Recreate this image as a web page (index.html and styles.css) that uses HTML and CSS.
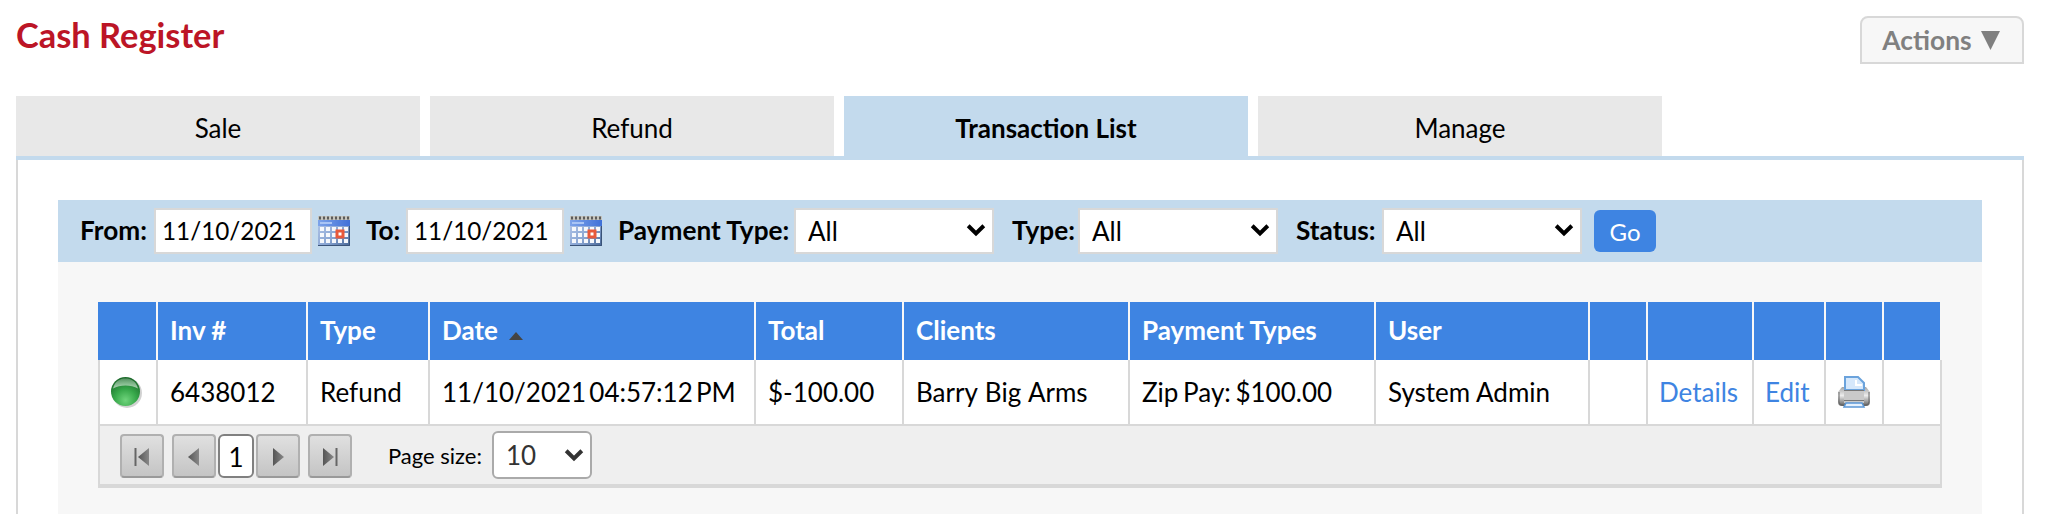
FILE: index.html
```html
<!DOCTYPE html>
<html lang="en">
<head>
    <meta charset="UTF-8">
    <meta name="viewport" content="width=device-width, initial-scale=1.0">
    <title>Cash Register</title>
    <link rel="stylesheet" href="styles.css">
</head>
<body>
    <!-- shared icons -->
    <svg class="defs" width="0" height="0">
        <defs>
            <linearGradient id="calHead" x1="0" y1="0" x2="1" y2="0">
                <stop offset="0" stop-color="#7da3ea"/>
                <stop offset="1" stop-color="#3f70d8"/>
            </linearGradient>
            <linearGradient id="calBody" x1="0" y1="0" x2="1" y2="1">
                <stop offset="0" stop-color="#b9cbec"/>
                <stop offset="0.6" stop-color="#88a4d2"/>
                <stop offset="1" stop-color="#466594"/>
            </linearGradient>
            <radialGradient id="ball" cx="0.5" cy="0.8" r="0.75">
                <stop offset="0" stop-color="#6fd47c"/>
                <stop offset="0.5" stop-color="#37a84a"/>
                <stop offset="1" stop-color="#1c6b2b"/>
            </radialGradient>
            <linearGradient id="shine" x1="0" y1="0" x2="0" y2="1">
                <stop offset="0" stop-color="#fff" stop-opacity="0.25"/>
                <stop offset="1" stop-color="#fff" stop-opacity="0.6"/>
            </linearGradient>
            <linearGradient id="metal" x1="0" y1="0" x2="0" y2="1">
                <stop offset="0" stop-color="#a5a5a5"/>
                <stop offset="0.45" stop-color="#ececec"/>
                <stop offset="1" stop-color="#5e5e5e"/>
            </linearGradient>
            <linearGradient id="arrow" x1="0" y1="0" x2="1" y2="0">
                <stop offset="0" stop-color="#555"/>
                <stop offset="1" stop-color="#888"/>
            </linearGradient>
            <symbol id="calendar" viewBox="0 0 32 30">
                <rect width="32" height="30" fill="url(#calBody)"/>
                <rect width="32" height="4" fill="#c4c4be"/>
                <path d="M1 2h31" stroke="#5b5b5b" stroke-width="3" stroke-dasharray="2 2"/>
                <rect y="4" width="32" height="6" fill="url(#calHead)"/>
                <path d="M2 7h12" stroke="#a9c4f5" stroke-width="2"/>
                <path d="M2 13h28M2 19h28M2 25h28" stroke="#f6f8fc" stroke-width="4" stroke-dasharray="4 2"/>
                <rect x="19" y="15" width="6" height="6" fill="#fff" stroke="#e8593b" stroke-width="3"/>
                <path d="M31.500 10v19.500H0" fill="none" stroke="#3a5378"/>
            </symbol>
            <symbol id="chevron" viewBox="0 0 20 14">
                <path d="M2.200 2.800L10 10.400l7.800-7.600" fill="none" stroke="currentColor" stroke-width="4"/>
            </symbol>
        </defs>
    </svg>

    <div class="header">
        <h1>Cash Register</h1>
        <button class="actions">Actions <svg width="19" height="19"><path d="M0 0h19L9.500 19z" fill="currentColor"/></svg></button>
    </div>

    <div class="tabs">
        <a class="tab">Sale</a>
        <a class="tab">Refund</a>
        <a class="tab active">Transaction List</a>
        <a class="tab">Manage</a>
    </div>

    <div class="panel">
        <div class="filter">
            <label class="from">From:</label>
            <input type="text" value="11/10/2021">
            <svg class="cal"><use href="#calendar"/></svg>
            <label class="to">To:</label>
            <input type="text" value="11/10/2021">
            <svg class="cal"><use href="#calendar"/></svg>
            <label class="payment">Payment Type:</label>
            <span class="select"><select><option>All</option></select><svg class="chev"><use href="#chevron"/></svg></span>
            <label class="type">Type:</label>
            <span class="select"><select><option>All</option></select><svg class="chev"><use href="#chevron"/></svg></span>
            <label class="status">Status:</label>
            <span class="select"><select><option>All</option></select><svg class="chev"><use href="#chevron"/></svg></span>
            <button class="go">Go</button>
        </div>

        <div class="content">
            <table class="grid">
                <colgroup>
                    <col class="c-icon"><col class="c-inv"><col class="c-type"><col class="c-date"><col class="c-total"><col class="c-clients"><col class="c-pay"><col class="c-user"><col class="c-blank"><col class="c-details"><col class="c-edit"><col class="c-blank"><col class="c-blank">
                </colgroup>
                <thead>
                    <tr>
                        <th></th>
                        <th>Inv #</th>
                        <th>Type</th>
                        <th>Date <svg class="sort" width="14" height="8"><path d="M0 8L7 0l7 8z" fill="#444"/></svg></th>
                        <th>Total</th>
                        <th>Clients</th>
                        <th>Payment Types</th>
                        <th>User</th>
                        <th></th>
                        <th></th>
                        <th></th>
                        <th></th>
                        <th></th>
                    </tr>
                </thead>
                <tbody>
                    <tr>
                        <td>
                            <svg class="icon" width="32" height="32" viewBox="0 0 32 32">
                                <ellipse cx="16" cy="17" rx="15" ry="15" fill="#000" opacity="0.18"/>
                                <circle cx="14.500" cy="15.500" r="14.500" fill="url(#ball)"/>
                                <path d="M2 12.500C4 5 9 2.500 14.500 2.500S25 5 27 12.500C20 8.500 9 8.500 2 12.500z" fill="url(#shine)"/>
                            </svg>
                        </td>
                        <td>6438012</td>
                        <td>Refund</td>
                        <td class="date">11/10/2021 04:57:12 PM</td>
                        <td>$-100.00</td>
                        <td class="client">Barry Big Arms</td>
                        <td class="payments">Zip Pay: $100.00</td>
                        <td>System Admin</td>
                        <td></td>
                        <td><a>Details</a></td>
                        <td><a>Edit</a></td>
                        <td>
                            <svg class="icon" width="32" height="32" viewBox="0 0 32 32">
                                <path d="M4 11h24l4 5v10q0 4-4 4H4q-4 0-4-4V16z" fill="url(#metal)"/>
                                <path d="M1 16v10q0 3 4 3h22q4 0 4-3V16" fill="none" stroke="#666"/>
                                <path d="M7 14V1h13l6 6v7z" fill="#d6e8fb" stroke="#6ba3dc" stroke-width="2"/>
                                <path d="M18 4v5h6" fill="none" stroke="#fff" stroke-width="2"/>
                                <rect x="6" y="14" width="20" height="13" fill="#c9c9c9"/>
                                <path d="M6 14.500h20M6 24.500h20" stroke="#777"/>
                                <path d="M8 27h16l2 4H6z" fill="#e6f1fd" stroke="#5b97d6" stroke-width="1.500"/>
                            </svg>
                        </td>
                        <td></td>
                    </tr>
                </tbody>
            </table>
            <div class="pager">
                <button class="nav"><svg width="16" height="20"><path d="M1.500 1v18" stroke="#666" stroke-width="2"/><path d="M15 1v18L4 10z" fill="url(#arrow)"/></svg></button>
                <button class="nav prev"><svg width="16" height="20"><path d="M13 1v18L2 10z" fill="url(#arrow)"/></svg></button>
                <span class="page">1</span>
                <button class="nav"><svg width="16" height="20"><path d="M3 1v18l11-9z" fill="url(#arrow)"/></svg></button>
                <button class="nav last"><svg width="16" height="20"><path d="M1 1v18l11-9z" fill="url(#arrow)"/><path d="M14.500 1v18" stroke="#666" stroke-width="2"/></svg></button>
                <label>Page size:</label>
                <span class="select size"><select><option>10</option></select><svg class="chev"><use href="#chevron"/></svg></span>
            </div>
        </div>
    </div>
</body>
</html>
```
FILE: styles.css
```css
* {
    box-sizing: border-box;
}

body {
    margin: 0;
    padding: 16px 28px 0 16px;
    height: 514px;
    overflow: hidden;
    display: flex;
    flex-direction: column;
    font-family: Lato, sans-serif;
    font-size: 26px;
    color: #000;
    background: #fff;
}

button, input, select {
    font-family: inherit;
    margin: 0;
}

.defs {
    position: absolute;
}

/* title row */
.header {
    display: flex;
    justify-content: space-between;
    height: 80px;
}

h1 {
    margin: 0;
    font-size: 34.4px;
    line-height: 38px;
    color: #bc1526;
}

.actions {
    display: flex;
    justify-content: center;
    align-items: center;
    gap: 9px;
    width: 164px;
    height: 48px;
    padding: 0 2px 0 0;
    border: 2px solid #d8d8d8;
    border-radius: 8px 8px 0 0;
    background: #f7f7f7;
    color: #808080;
    font-size: 26.4px;
    font-weight: bold;
}

/* tabs */
.tabs {
    display: flex;
    gap: 10px;
}

.tab {
    width: 404px;
    height: 60px;
    line-height: 64px;
    text-align: center;
    background: #e8e8e8;
}

.tab.active {
    background: #c3daed;
    font-weight: bold;
}

.panel {
    flex: 1;
    display: flex;
    flex-direction: column;
    border-top: 4px solid #c3daed;
    padding: 40px 42px 0;
    background: linear-gradient(#d8d8d8, #d8d8d8) left / 2px 100% no-repeat,
                linear-gradient(#d8d8d8, #d8d8d8) right / 2px 100% no-repeat;
}

/* search bar */
.filter {
    display: flex;
    align-items: center;
    height: 62px;
    padding-left: 22px;
    background: #c3daed;
}

.filter label {
    padding-bottom: 2px;
    font-size: 26.2px;
    font-weight: bold;
    white-space: nowrap;
}

.from { width: 74px; }
.to { width: 40px; }
.payment { width: 176px; }
.type { width: 66px; }
.status { width: 86px; }

.filter input {
    width: 158px;
    height: 46px;
    padding: 0 6px 2px;
    border: 2px solid #d8d8d8;
    background: #fff;
    font-size: 24.3px;
}

.cal {
    width: 32px;
    height: 30px;
    margin: 0 16px 0 6px;
}

.select {
    display: grid;
    align-items: center;
    width: 200px;
    height: 46px;
    margin-right: 18px;
}

.select select, .select svg {
    grid-area: 1 / 1;
}

.select select {
    appearance: none;
    width: 100%;
    height: 100%;
    padding: 0 12px;
    border: 2px solid #d8d8d8;
    border-radius: 0;
    background: #fff;
    color: #000;
    font-size: 26px;
}

.chev {
    justify-self: end;
    width: 20px;
    height: 14px;
    margin: 0 8px 2px 0;
    pointer-events: none;
}

.go {
    width: 62px;
    height: 42px;
    margin-left: -6px;
    padding: 0;
    border: 0;
    border-radius: 6px;
    background: #3e84e2;
    color: #fff;
    font-size: 24px;
}

/* results */
.content {
    flex: 1;
    padding: 40px 40px 0;
    background: #f7f7f7;
}

.grid {
    width: 1844px;
    table-layout: fixed;
    border-collapse: separate;
    border-spacing: 0;
}

.c-icon { width: 60px; }
.c-inv { width: 150px; }
.c-type { width: 122px; }
.c-date { width: 326px; }
.c-total { width: 148px; }
.c-clients { width: 226px; }
.c-pay { width: 246px; }
.c-user { width: 214px; }
.c-blank { width: 58px; }
.c-details { width: 106px; }
.c-edit { width: 72px; }

.grid th, .grid td {
    padding: 0 0 0 12px;
    text-align: left;
    white-space: nowrap;
}

.grid th {
    height: 58px;
    padding-bottom: 2px;
    border-right: 2px solid #f7f7f7;
    background: #3e84e2;
    background-clip: padding-box;
    color: #fff;
}

.grid td {
    height: 66px;
    border-right: 2px solid #d8d8d8;
    border-bottom: 2px solid #d8d8d8;
    background: #fff;
}

.grid td:first-child {
    padding-left: 11px;
    border-left: 2px solid #d8d8d8;
}

.grid .date { word-spacing: -3.5px; }
.grid .client { word-spacing: 1px; }
.grid .payments { word-spacing: -2px; }

.grid a {
    margin-left: -1px;
    color: #3e84e2;
}

.icon {
    display: block;
}

.sort {
    margin-left: 5px;
}

.pager {
    display: flex;
    align-items: center;
    width: 1844px;
    height: 62px;
    padding-left: 20px;
    border: 2px solid #d8d8d8;
    border-top: 0;
    border-bottom-width: 4px;
    background: #efefef;
}

.nav {
    display: flex;
    align-items: center;
    justify-content: center;
    width: 44px;
    height: 44px;
    margin-top: 2px;
    padding: 2px 0 0;
    border: 2px solid #b0b0b0;
    border-bottom-color: #999;
    border-radius: 4px;
    background: linear-gradient(#e0e0e0, #c4c4c4);
}

.nav.prev, .nav.last {
    margin-left: 8px;
}

.page {
    width: 36px;
    height: 44px;
    margin: 2px 2px 0;
    border: 2px solid #808080;
    border-radius: 6px;
    background: #fff;
    text-align: center;
    line-height: 42px;
}

.pager label {
    margin-left: 36px;
    width: 104px;
    font-size: 22px;
}

.select.size {
    width: 100px;
    height: 48px;
}

.size select {
    padding: 0 12px;
    border-color: #aaa;
    border-radius: 6px;
    color: #333;
}

.size .chev {
    margin-bottom: 0;
    color: #333;
}
```
